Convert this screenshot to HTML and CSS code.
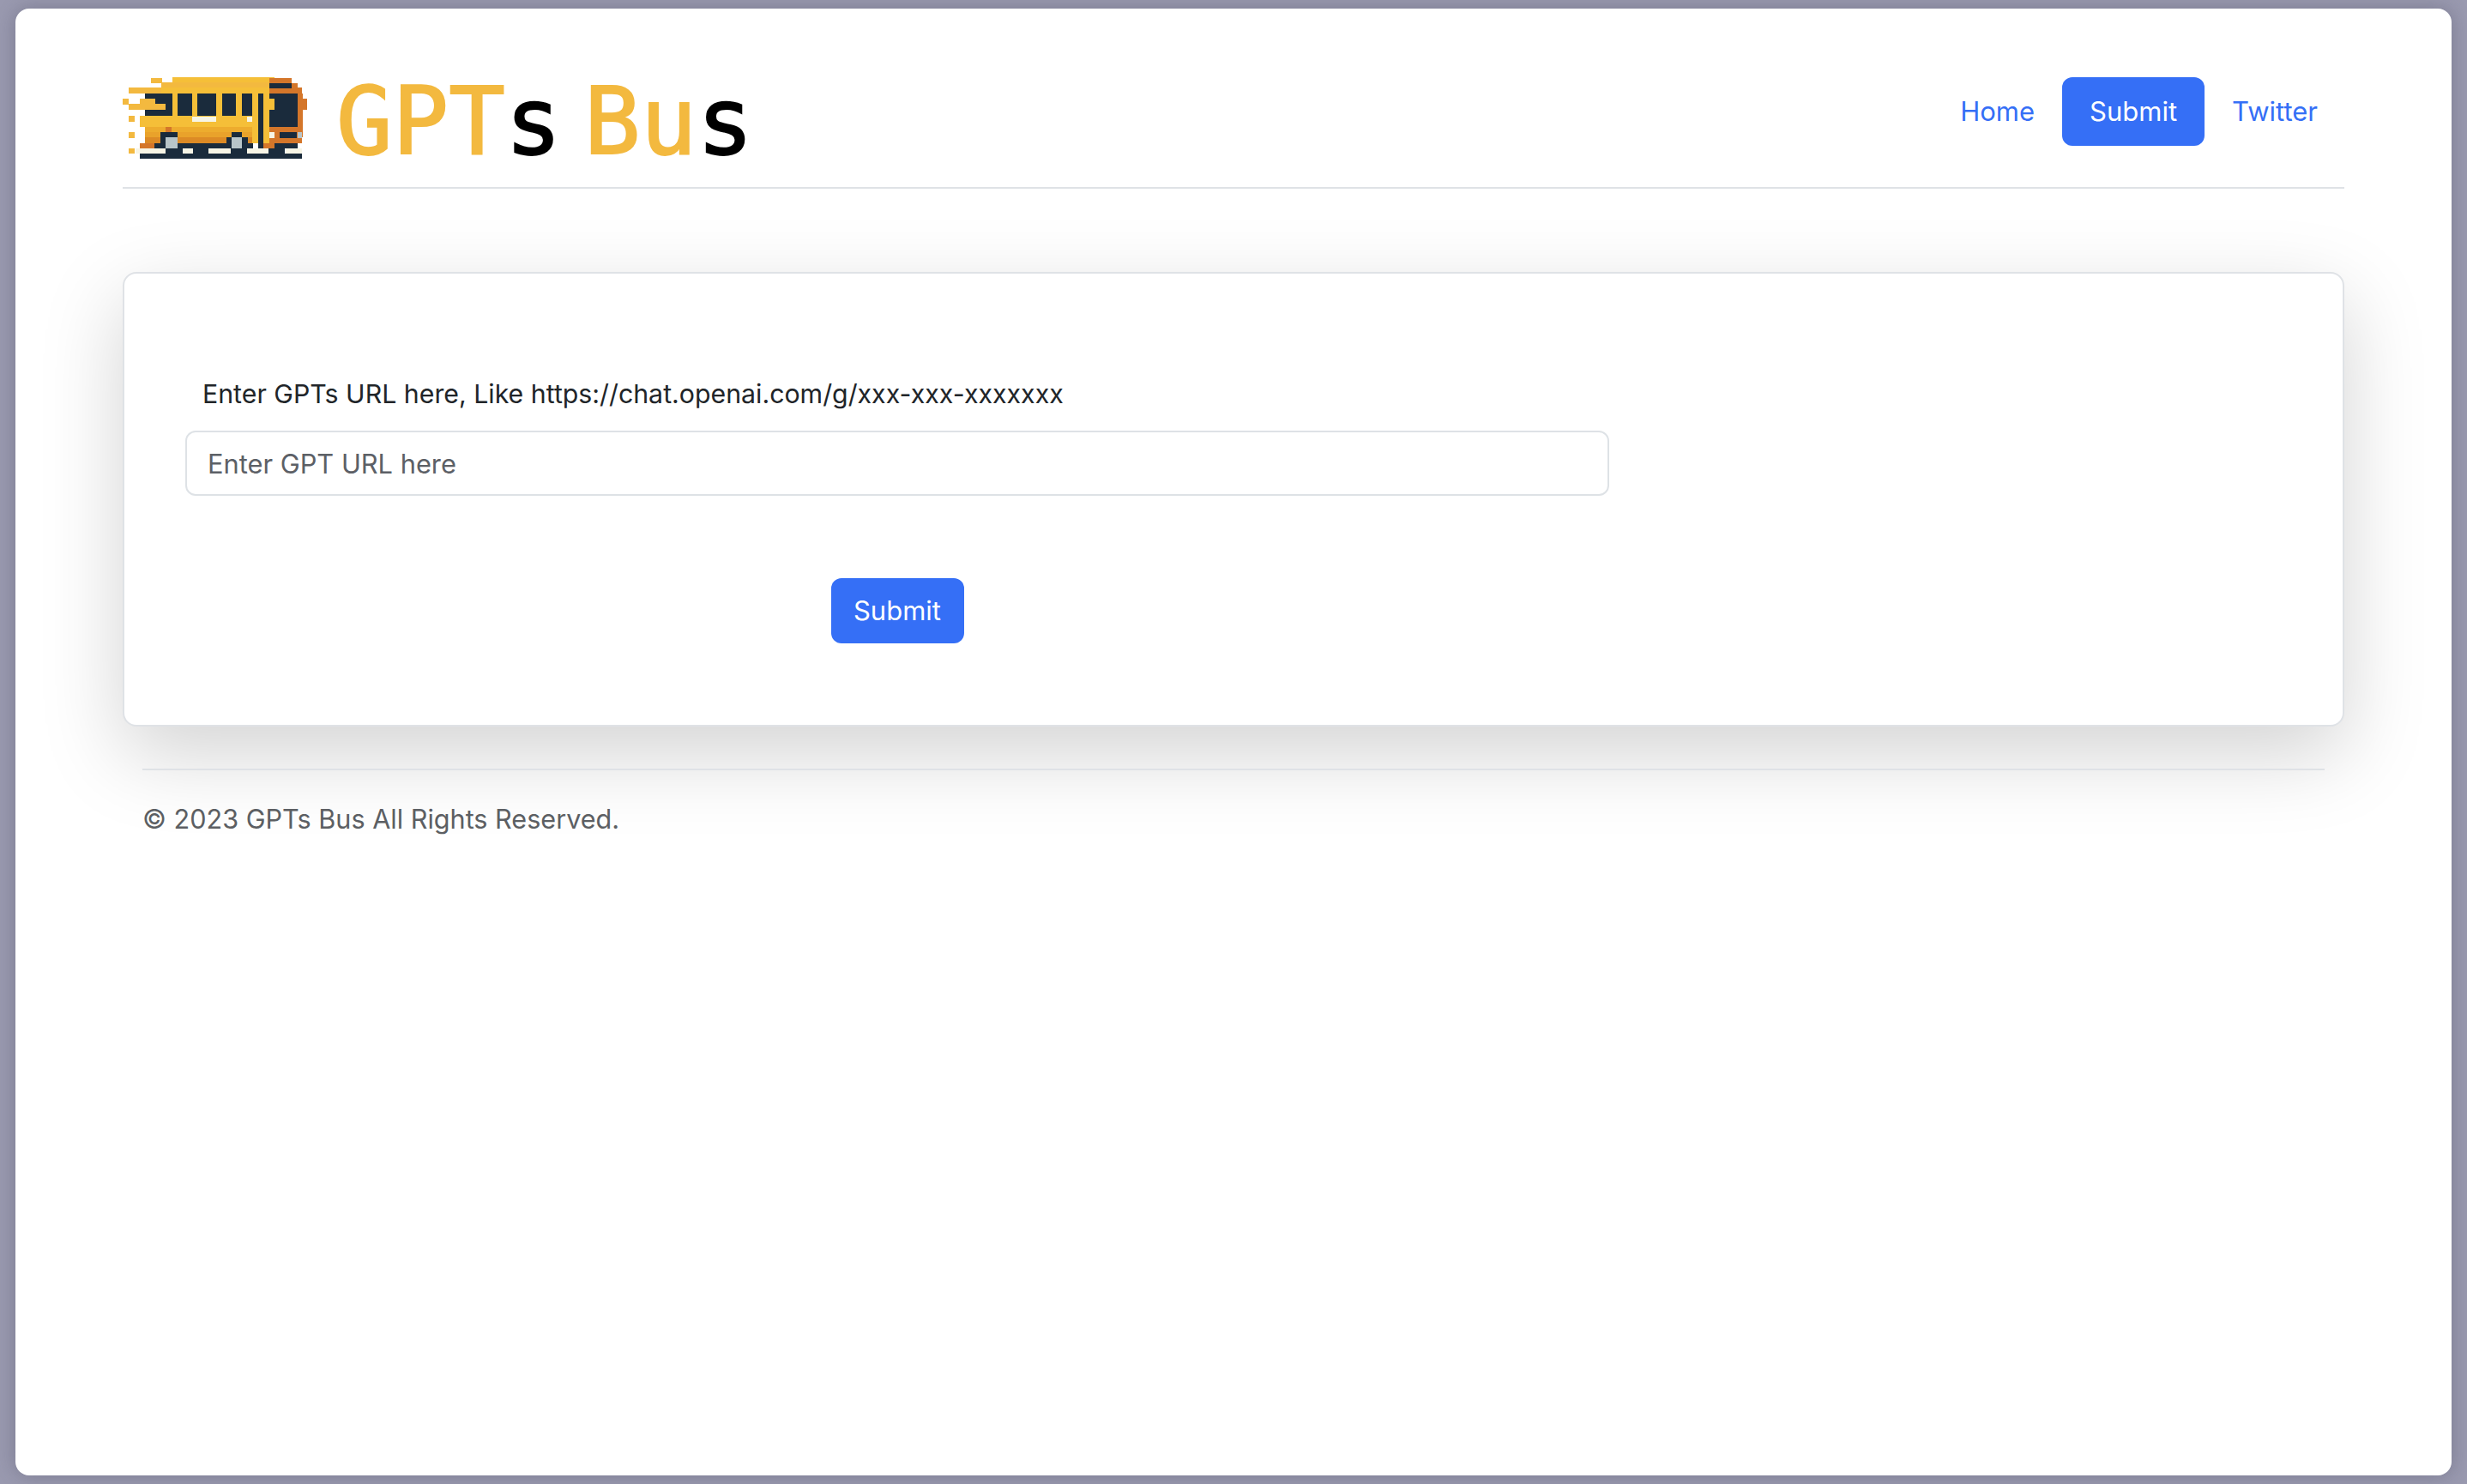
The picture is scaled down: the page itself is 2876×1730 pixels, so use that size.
FILE: index.html
```html
<!DOCTYPE html>
<html lang="en">
<head>
    <meta charset="UTF-8">
    <meta name="viewport" content="width=device-width, initial-scale=1.0">
    <title>GPTs Bus - Submit</title>
    <link rel="stylesheet" href="styles.css">
</head>
<body>
    <div class="window">
        <header class="site-header">
            <a class="logo" href="#">
                <svg class="logo-bus" viewBox="36 60 650 290" shape-rendering="crispEdges" aria-hidden="true">
                    <!-- roof and speed lines -->
                    <rect class="y1" x="210" y="60" width="360" height="20"/>
                    <rect class="y2" x="133" y="62" width="40" height="18"/>
                    <rect class="y2" x="172" y="78" width="378" height="20"/>
                    <rect class="y2" x="57" y="97" width="113" height="19"/>
                    <rect class="y1" x="170" y="97" width="380" height="19"/>
                    <rect class="y1" x="210" y="116" width="340" height="82"/>
                    <!-- side windows -->
                    <rect class="dark" x="114" y="116" width="96" height="80"/>
                    <rect class="dark" x="228" y="116" width="52" height="80"/>
                    <rect class="dark" x="298" y="116" width="67" height="80"/>
                    <rect class="dark" x="385" y="116" width="50" height="80"/>
                    <rect class="dark" x="454" y="116" width="38" height="80"/>
                    <rect class="y2" x="36" y="135" width="20" height="22"/>
                    <rect class="y2" x="95" y="135" width="55" height="22"/>
                    <rect class="y2" x="57" y="155" width="130" height="20"/>
                    <rect class="y2" x="57" y="197" width="19" height="19"/>
                    <rect class="y2" x="57" y="254" width="19" height="19"/>
                    <rect class="y2" x="57" y="311" width="19" height="19"/>
                    <!-- body bands -->
                    <rect class="y1" x="95" y="197" width="455" height="38"/>
                    <rect class="y3" x="114" y="235" width="380" height="20"/>
                    <rect class="y4" x="114" y="254" width="380" height="20"/>
                    <rect class="o1" x="114" y="272" width="380" height="20"/>
                    <rect class="o2" x="95" y="292" width="55" height="19"/>
                    <rect class="o2" x="187" y="235" width="20" height="19"/>
                    <rect class="y1" x="492" y="116" width="58" height="176"/>
                    <rect class="white" x="280" y="199" width="85" height="17"/>
                    <rect class="white" x="473" y="199" width="19" height="17"/>
                    <!-- front of the bus -->
                    <rect class="o2" x="550" y="62" width="80" height="18"/>
                    <rect class="o2" x="630" y="80" width="20" height="20"/>
                    <rect class="o2" x="550" y="97" width="115" height="20"/>
                    <rect class="o2" x="650" y="116" width="18" height="155"/>
                    <rect class="o2" x="665" y="135" width="20" height="40"/>
                    <rect class="o2" x="550" y="235" width="115" height="57"/>
                    <rect class="o2" x="530" y="292" width="40" height="19"/>
                    <rect class="dark" x="550" y="80" width="80" height="18"/>
                    <rect class="dark" x="550" y="116" width="100" height="119"/>
                    <rect class="y1" x="550" y="135" width="20" height="40"/>
                    <rect class="white" x="550" y="254" width="19" height="19"/>
                    <rect class="dark" x="587" y="254" width="62" height="19"/>
                    <rect class="grey" x="650" y="254" width="17" height="19"/>
                    <rect class="dark" x="570" y="292" width="80" height="20"/>
                    <rect class="dark" x="511" y="116" width="19" height="195"/>
                    <!-- wheels and road -->
                    <rect class="dark" x="168" y="254" width="60" height="40"/>
                    <rect class="dark" x="417" y="254" width="38" height="18"/>
                    <rect class="dark" x="400" y="272" width="75" height="20"/>
                    <rect class="dark" x="148" y="292" width="345" height="20"/>
                    <rect class="grey" x="187" y="272" width="40" height="40"/>
                    <rect class="grey" x="417" y="272" width="38" height="40"/>
                    <rect class="dark" x="187" y="311" width="420" height="19"/>
                    <rect class="dark" x="95" y="330" width="570" height="18"/>
                    <rect class="white" x="80" y="311" width="107" height="19"/>
                    <rect class="white" x="245" y="311" width="36" height="19"/>
                    <rect class="white" x="338" y="311" width="78" height="19"/>
                    <rect class="white" x="473" y="311" width="76" height="19"/>
                    <rect class="white" x="610" y="311" width="55" height="19"/>
                </svg>
                <span class="logo-text">GPT<b>s</b> Bu<b>s</b></span>
            </a>
            <nav class="nav">
                <a class="nav-link" href="#">Home</a>
                <a class="nav-link active" href="#">Submit</a>
                <a class="nav-link" href="#">Twitter</a>
            </nav>
        </header>

        <main class="card">
            <form class="submit-form">
                <label class="form-label" for="gptUrl">Enter GPTs URL here, Like https://chat.openai.com/g/xxx-xxx-xxxxxxx</label>
                <input class="form-input" type="text" id="gptUrl" placeholder="Enter GPT URL here">
                <button class="btn" type="submit">Submit</button>
            </form>
        </main>

        <footer class="site-footer">
            <p>© 2023 GPTs Bus All Rights Reserved.</p>
        </footer>
    </div>
</body>
</html>
```

FILE: styles.css
```css
* {
    box-sizing: border-box;
}
html, body {
    height: 100%;
    margin: 0;
}
body {
    padding: 10px 18px;
    background-color: #9a9ab0;
    font-family: Inter, "Liberation Sans", sans-serif;
    font-size: 30.6px;
    line-height: 48px;
    overflow: hidden;
}
.window {
    height: 100%;
    padding: 0 125px;
    background-color: #fff;
    border-radius: 16px;
    box-shadow: 0 0 24px rgba(60, 60, 80, 0.35);
    overflow: hidden;
}

/* header */
.site-header {
    display: flex;
    justify-content: space-between;
    align-items: flex-start;
    padding: 80px 0 32px;
    border-bottom: 2px solid #dfe2e6;
}
.logo {
    display: flex;
    align-items: flex-start;
    height: 96px;
    color: #f3b93f;
    text-decoration: none;
}
.logo-bus {
    width: 216px;
    height: 96px;
}
.logo-text {
    margin-left: 33px;
    font-family: "DejaVu Sans Mono", monospace;
    font-size: 109px;
    line-height: 104px;
    word-spacing: -39px;
    white-space: pre;
    -webkit-text-stroke: 2px currentColor;
}
.logo-text b {
    color: #000;
    font-weight: normal;
}
.y1 { fill: #f5bf38; }
.y2 { fill: #f3b93f; }
.y3 { fill: #edac2e; }
.y4 { fill: #e9a22b; }
.o1 { fill: #dc8a25; }
.o2 { fill: #d4762a; }
.dark { fill: #1a2b3c; }
.white { fill: #f7f5e6; }
.grey { fill: #b8c5c9; }

.nav {
    display: flex;
    margin-right: -1px;
    font-size: 31px;
}
.nav-link {
    padding: 16px 32px;
    color: #356ff6;
    border-radius: 12px;
    text-decoration: none;
}
.nav-link.active {
    color: #fff;
    background-color: #356ff6;
}

/* card */
.card {
    margin-top: 97px;
    padding: 116px 72px 95px 71px;
    background-color: #fff;
    border: 2px solid #dfe2e6;
    border-radius: 16px;
    box-shadow: 0 32px 96px rgba(0, 0, 0, 0.175);
}
.submit-form {
    display: flex;
    flex-direction: column;
    align-items: center;
    width: 1660px;
}
.form-label {
    align-self: flex-start;
    margin: 0 0 19px 20px;
    color: #212529;
    font-size: 30.3px;
}
.form-input {
    width: 100%;
    height: 76px;
    padding: 0 24px;
    color: #212529;
    font: inherit;
    font-size: 30.8px;
    background-color: #fff;
    border: 2px solid #dee2e6;
    border-radius: 12px;
}
.form-input::placeholder {
    color: #5c6066;
    opacity: 1;
}
.btn {
    width: 155px;
    height: 76px;
    margin-top: 96px;
    padding: 0;
    color: #fff;
    font: inherit;
    font-size: 31px;
    background-color: #356ff6;
    border: none;
    border-radius: 12px;
}

/* footer */
.site-footer {
    margin: 49px 23px 0;
    padding-top: 33px;
    color: #5c5f63;
    border-top: 2px solid #dfe2e6;
}
.site-footer p {
    margin: 0;
}
```
